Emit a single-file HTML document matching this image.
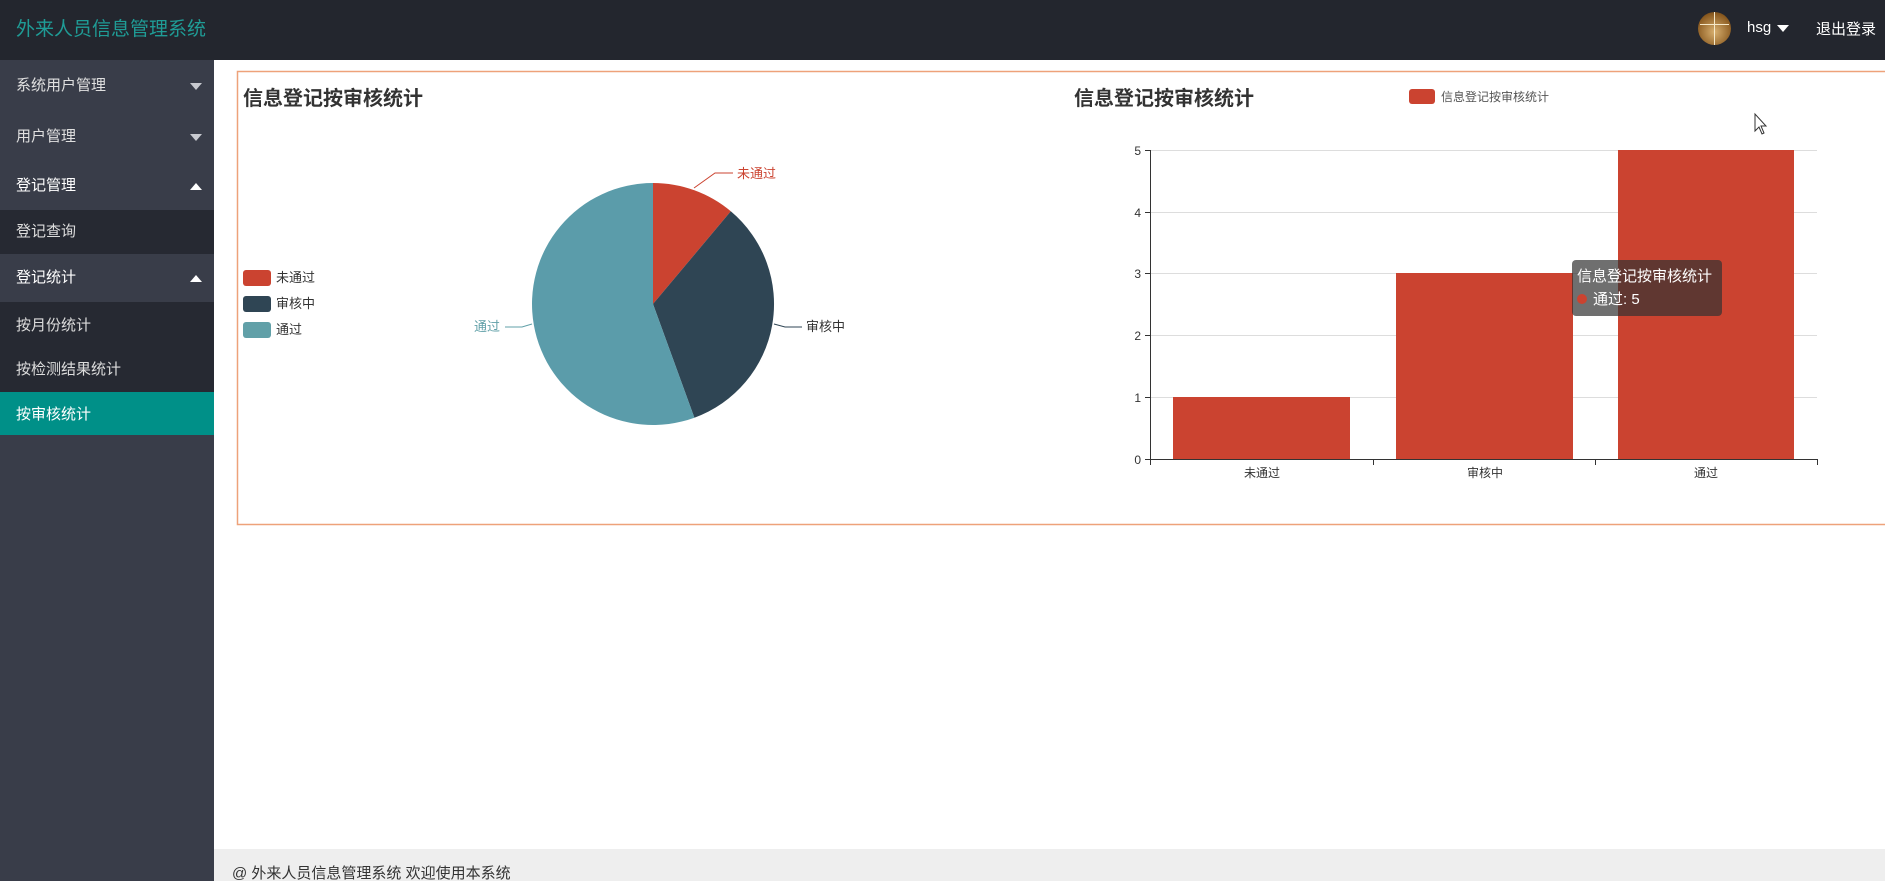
<!DOCTYPE html>
<html><head><meta charset="utf-8"><style>
*{margin:0;padding:0;box-sizing:border-box}
body{width:1885px;height:881px;overflow:hidden;background:#fff;font-family:"Liberation Sans","Noto Sans CJK SC",sans-serif;position:relative}
.hdr{position:absolute;left:0;top:0;width:1885px;height:60px;background:#23262e}
.logo{position:absolute;left:16px;top:14px;font-size:19px;color:#1f9c96}
.side{position:absolute;left:0;top:60px;width:214px;height:821px;background:#393d49}
.it{position:absolute;left:0;width:214px;color:#fff;font-size:15px;padding-left:16px}
.car{position:absolute;right:12px;width:0;height:0;border-left:6px solid transparent;border-right:6px solid transparent}
.dn{border-top:7px solid #c8cad0}
.up{border-bottom:7px solid #fff}
.foot{position:absolute;left:214px;top:849px;width:1671px;height:32px;background:#eee;font-size:15px;color:#333;padding:17px 0 0 18px;line-height:16px}
</style></head><body>
<div class="hdr">
<div class="logo">外来人员信息管理系统</div>
<div style="position:absolute;left:1698px;top:12px;width:33px;height:33px;border-radius:50%;background:radial-gradient(circle at 50% 60%,#d8b070,#8a5a20 70%,#402810)"></div>
<div style="position:absolute;left:1714px;top:12px;width:1px;height:33px;background:#f5e8c8"></div>
<div style="position:absolute;left:1700px;top:24px;width:29px;height:1px;background:#f5e8c8"></div>
<div style="position:absolute;left:1747px;top:19px;color:#fff;font-size:15px">hsg</div>
<div style="position:absolute;left:1777px;top:25px;border-left:6px solid transparent;border-right:6px solid transparent;border-top:7px solid #fff"></div>
<div style="position:absolute;left:1816px;top:18px;color:#fff;font-size:15px">退出登录</div>
</div>
<div class="side">
<div class="it" style="top:0;height:52px;line-height:52px;color:#e0e0e0">系统用户管理<span class="car dn" style="top:23px"></span></div>
<div class="it" style="top:52px;height:50px;line-height:50px;color:#e0e0e0">用户管理<span class="car dn" style="top:22px"></span></div>
<div class="it" style="top:102px;height:48px;line-height:48px">登记管理<span class="car up" style="top:21px"></span></div>
<div class="it" style="top:150px;height:44px;line-height:44px;background:#262932;color:#ddd">登记查询</div>
<div class="it" style="top:194px;height:48px;line-height:48px">登记统计<span class="car up" style="top:21px"></span></div>
<div class="it" style="top:242px;height:90px;background:#262932;color:#ddd;padding-top:2px"><div style="line-height:44px">按月份统计</div><div style="line-height:44px">按检测结果统计</div></div>
<div class="it" style="top:332px;height:43px;line-height:45px;background:#009088">按审核统计</div>
</div>
<svg style="position:absolute;left:0;top:0" width="1885" height="881" font-family="Liberation Sans,Noto Sans CJK SC,sans-serif">
<rect x="237.5" y="71.5" width="1700" height="453" fill="none" stroke="#eea27a" stroke-width="1.5"/>
<text x="243" y="105" font-size="20" font-weight="bold" fill="#333">信息登记按审核统计</text>
<rect x="243" y="270" width="28" height="16" rx="3" fill="#cb4330"/><text x="276" y="282" font-size="13" fill="#333">未通过</text>
<rect x="243" y="296" width="28" height="16" rx="3" fill="#2f4554"/><text x="276" y="308" font-size="13" fill="#333">审核中</text>
<rect x="243" y="322" width="28" height="16" rx="3" fill="#61a0a8"/><text x="276" y="334" font-size="13" fill="#333">通过</text>
<g transform="translate(653,304)">
<path d="M0,0 L0,-121 A121,121 0 0 1 77.8,-92.7 Z" fill="#cb4330"/>
<path d="M0,0 L77.8,-92.7 A121,121 0 0 1 41.4,113.7 Z" fill="#2f4554"/>
<path d="M0,0 L41.4,113.7 A121,121 0 1 1 0,-121 Z" fill="#5b9caa"/>
</g>
<polyline points="694,188 715,173 733,173" fill="none" stroke="#cb4330"/><text x="737" y="178" font-size="13" fill="#cb4330">未通过</text>
<polyline points="774,324 785,327 802,327" fill="none" stroke="#2f4554"/><text x="806" y="331" font-size="13" fill="#333">审核中</text>
<polyline points="532,324 522,327 505,327" fill="none" stroke="#61a0a8"/><text x="500" y="331" font-size="13" fill="#61a0a8" text-anchor="end">通过</text>
<text x="1074" y="105" font-size="20" font-weight="bold" fill="#333">信息登记按审核统计</text>
<rect x="1409" y="89" width="26" height="15" rx="3" fill="#cb4330"/><text x="1441" y="101" font-size="12" fill="#555">信息登记按审核统计</text>
<g stroke="#ddd"><line x1="1150" y1="150.5" x2="1817" y2="150.5"/><line x1="1150" y1="212.5" x2="1817" y2="212.5"/><line x1="1150" y1="273.5" x2="1817" y2="273.5"/><line x1="1150" y1="335.5" x2="1817" y2="335.5"/><line x1="1150" y1="397.5" x2="1817" y2="397.5"/></g>
<rect x="1173" y="397" width="177" height="62" fill="#cb4330"/>
<rect x="1396" y="273" width="177" height="186" fill="#cb4330"/>
<rect x="1618" y="150" width="176" height="309" fill="#cb4330"/>
<g stroke="#333"><line x1="1150.5" y1="150" x2="1150.5" y2="459"/><line x1="1150" y1="459.5" x2="1817" y2="459.5"/>
<line x1="1145" y1="150.5" x2="1150" y2="150.5"/><line x1="1145" y1="212.5" x2="1150" y2="212.5"/><line x1="1145" y1="273.5" x2="1150" y2="273.5"/><line x1="1145" y1="335.5" x2="1150" y2="335.5"/><line x1="1145" y1="397.5" x2="1150" y2="397.5"/><line x1="1145" y1="459.5" x2="1150" y2="459.5"/>
<line x1="1150.5" y1="459" x2="1150.5" y2="465"/><line x1="1373.5" y1="459" x2="1373.5" y2="465"/><line x1="1595.5" y1="459" x2="1595.5" y2="465"/><line x1="1817.5" y1="459" x2="1817.5" y2="465"/></g>
<g font-size="12" fill="#333" text-anchor="end"><text x="1141" y="155">5</text><text x="1141" y="217">4</text><text x="1141" y="278">3</text><text x="1141" y="340">2</text><text x="1141" y="402">1</text><text x="1141" y="464">0</text></g>
<g font-size="12" fill="#333" text-anchor="middle"><text x="1262" y="477">未通过</text><text x="1485" y="477">审核中</text><text x="1706" y="477">通过</text></g>
<rect x="1572" y="260" width="150" height="56" rx="4" fill="rgba(50,50,50,0.7)"/>
<text x="1577" y="281" font-size="15" fill="#fff">信息登记按审核统计</text>
<circle cx="1582" cy="299" r="5" fill="#cb4330"/><text x="1593" y="304" font-size="15" fill="#fff">通过: 5</text>
<path d="M1755,114 L1755,131 L1759,127 L1762,134 L1764,133 L1761,126 L1766,126 Z" fill="#fff" stroke="#333"/>
</svg>
<div class="foot">@ 外来人员信息管理系统 欢迎使用本系统</div>
</body></html>
